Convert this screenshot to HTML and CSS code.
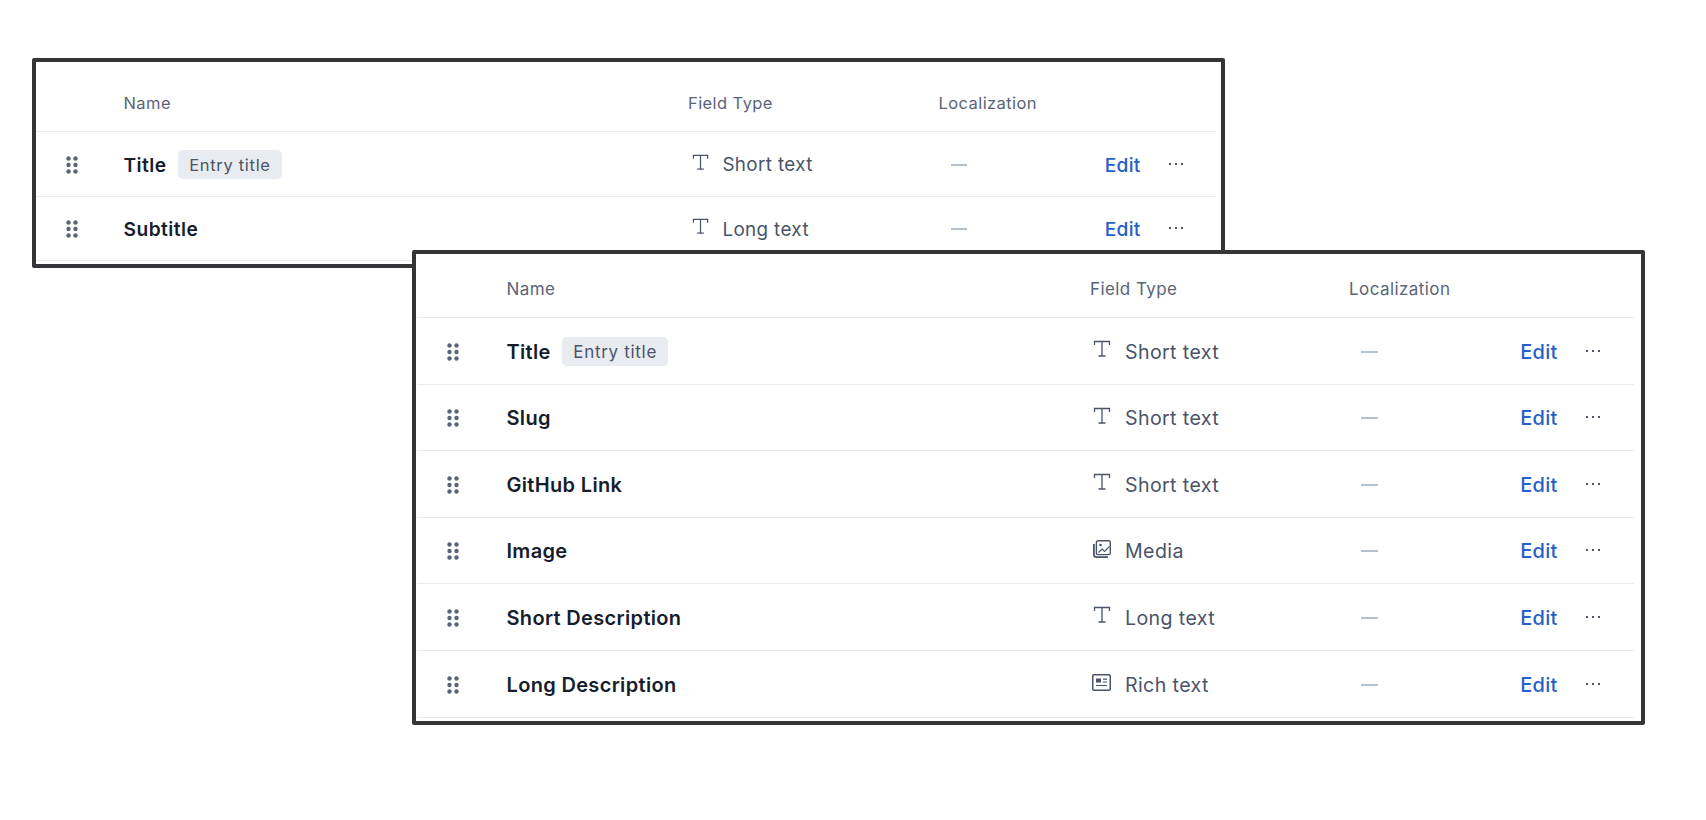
FILE: index.html
```html
<!DOCTYPE html>
<html lang="en">

<head>
    <meta charset="UTF-8">
    <meta name="viewport" content="width=device-width, initial-scale=1.0">
    <title>Content Model Fields</title>
    <link rel="stylesheet" href="styles.css">
</head>

<body>
    <svg class="sprite" width="0" height="0">
        <symbol id="icon-grip" viewBox="0 0 12 18">
            <circle cx="2.5" cy="2.5" r="2.2"/><circle cx="9.5" cy="2.5" r="2.2"/>
            <circle cx="2.5" cy="9" r="2.2"/><circle cx="9.5" cy="9" r="2.2"/>
            <circle cx="2.5" cy="15.5" r="2.2"/><circle cx="9.5" cy="15.5" r="2.2"/>
        </symbol>
        <symbol id="icon-text" viewBox="0 0 18 18">
            <path d="M1.5 5V1.5h15V5M9 1.5v14.5M5.5 16h7" fill="none" stroke="currentColor" stroke-width="1.3"/>
        </symbol>
        <symbol id="icon-media" viewBox="0 0 18 18">
            <rect x="3.4" y="0.7" width="13.9" height="13.9" rx="1.6" fill="none" stroke="currentColor" stroke-width="1.4"/>
            <path d="M0.9 4v10.6A2.5 2.5 0 0 0 3.4 17.1H15" fill="none" stroke="currentColor" stroke-width="1.8"/>
            <path d="M5.5 12.5l3.5-3.5 2.5 2.500 5-5" fill="none" stroke="currentColor" stroke-width="1.2"/>
            <circle cx="7.5" cy="5" r="1.3" fill="currentColor"/>
        </symbol>
        <symbol id="icon-rich" viewBox="0 0 19 17">
            <rect x="0.75" y="0.75" width="17.5" height="15.5" rx="1.2" fill="none" stroke="currentColor" stroke-width="1.5"/>
            <path d="M4 4.5h5v4H4z" fill="currentColor"/>
            <path d="M11 5.2h4M11 8h4M4 11.5h11" fill="none" stroke="currentColor" stroke-width="1.2"/>
        </symbol>
        <symbol id="icon-more" viewBox="0 0 16 4">
            <circle cx="2" cy="2" r="1.1"/><circle cx="8" cy="2" r="1.1"/><circle cx="14" cy="2" r="1.1"/>
        </symbol>
    </svg>

    <div class="frame frame-back">
        <div class="fields">
            <div class="head">
                <span></span><span>Name</span><span>Field Type</span><span>Localization</span><span></span>
            </div>
            <div class="row">
                <svg class="grip"><use href="#icon-grip"/></svg>
                <div class="name">Title <span class="tag">Entry title</span></div>
                <div class="type"><svg class="icon"><use href="#icon-text"/></svg>Short text</div>
                <div class="dash"></div>
                <div class="actions"><a class="edit">Edit</a><svg class="more"><use href="#icon-more"/></svg></div>
            </div>
            <div class="row">
                <svg class="grip"><use href="#icon-grip"/></svg>
                <div class="name">Subtitle</div>
                <div class="type"><svg class="icon"><use href="#icon-text"/></svg>Long text</div>
                <div class="dash"></div>
                <div class="actions"><a class="edit">Edit</a><svg class="more"><use href="#icon-more"/></svg></div>
            </div>
        </div>
    </div>

    <div class="frame frame-front">
        <div class="fields">
            <div class="head">
                <span></span><span>Name</span><span>Field Type</span><span>Localization</span><span></span>
            </div>
            <div class="row">
                <svg class="grip"><use href="#icon-grip"/></svg>
                <div class="name">Title <span class="tag">Entry title</span></div>
                <div class="type"><svg class="icon"><use href="#icon-text"/></svg>Short text</div>
                <div class="dash"></div>
                <div class="actions"><a class="edit">Edit</a><svg class="more"><use href="#icon-more"/></svg></div>
            </div>
            <div class="row">
                <svg class="grip"><use href="#icon-grip"/></svg>
                <div class="name">Slug</div>
                <div class="type"><svg class="icon"><use href="#icon-text"/></svg>Short text</div>
                <div class="dash"></div>
                <div class="actions"><a class="edit">Edit</a><svg class="more"><use href="#icon-more"/></svg></div>
            </div>
            <div class="row">
                <svg class="grip"><use href="#icon-grip"/></svg>
                <div class="name">GitHub Link</div>
                <div class="type"><svg class="icon"><use href="#icon-text"/></svg>Short text</div>
                <div class="dash"></div>
                <div class="actions"><a class="edit">Edit</a><svg class="more"><use href="#icon-more"/></svg></div>
            </div>
            <div class="row">
                <svg class="grip"><use href="#icon-grip"/></svg>
                <div class="name">Image</div>
                <div class="type"><svg class="icon"><use href="#icon-media"/></svg>Media</div>
                <div class="dash"></div>
                <div class="actions"><a class="edit">Edit</a><svg class="more"><use href="#icon-more"/></svg></div>
            </div>
            <div class="row">
                <svg class="grip"><use href="#icon-grip"/></svg>
                <div class="name">Short Description</div>
                <div class="type"><svg class="icon"><use href="#icon-text"/></svg>Long text</div>
                <div class="dash"></div>
                <div class="actions"><a class="edit">Edit</a><svg class="more"><use href="#icon-more"/></svg></div>
            </div>
            <div class="row">
                <svg class="grip"><use href="#icon-grip"/></svg>
                <div class="name">Long Description</div>
                <div class="type"><svg class="icon icon-wide"><use href="#icon-rich"/></svg>Rich text</div>
                <div class="dash"></div>
                <div class="actions"><a class="edit">Edit</a><svg class="more"><use href="#icon-more"/></svg></div>
            </div>
        </div>
    </div>
</body>
</html>
```

FILE: styles.css
```css
body {
    font-family: 'Inter', sans-serif;
    margin: 0;
    padding: 0;
    background-color: #fff;
    color: #4a5468;
}

.sprite {
    position: absolute;
}

/* the two screenshots overlap, so each frame is placed on the page */
.frame {
    position: absolute;
    box-sizing: border-box;
    background-color: #fff;
    border: 4px solid #333538;
    border-radius: 2px;
}

.frame-back {
    left: 32px;
    top: 58px;
    width: 1193px;
    height: 210px;
    padding: 0 5px 0 1px;
    font-size: 19.2px;
    --columns: 86.5px 564.5px 250.5px 1fr auto;
    --head: 70px;
    --head-shift: 13px;
    --small: 16.5px;
    --row: 64.5px;
    --name-spacing: 0.45px;
    --grip-left: 29px;
    --type-left: 4px;
    --type-gap: 13.4px;
    --action-gap: 27px;
    --action-end: 32.5px;
    --dash-offset: 12.5px;
    --dash-width: 16px;
    --icon: 17px;
}

.frame-front {
    left: 412px;
    top: 250px;
    width: 1233px;
    height: 475px;
    padding: 0 7px 0 1px;
    font-size: 20px;
    --columns: 89.5px 583.5px 259px 1fr auto;
    --head: 64px;
    --head-shift: 6px;
    --small: 17px;
    --row: 66.6px;
    --name-spacing: 0.33px;
    --grip-left: 29.5px;
    --type-left: 3px;
    --type-gap: 14px;
    --action-gap: 27px;
    --action-end: 33.5px;
    --dash-offset: 12px;
    --dash-width: 17px;
    --icon: 18px;
}

.head,
.row {
    display: grid;
    grid-template-columns: var(--columns);
    align-items: center;
    border-bottom: 1.5px solid #e8ebf0;
    box-sizing: border-box;
}

.head {
    height: var(--head);
    padding-top: var(--head-shift);
    font-size: var(--small);
    letter-spacing: 0.42px;
    color: #5a6478;
}

.row {
    height: var(--row);
    padding-top: 1.5px;
}

.grip {
    width: 12px;
    height: 18px;
    margin-left: var(--grip-left);
    fill: #5a6478;
}

.name {
    display: flex;
    align-items: center;
    gap: 11.5px;
    font-weight: 600;
    letter-spacing: var(--name-spacing);
    color: #161d2d;
}

.tag {
    padding: 4.5px 11px;
    font-size: var(--small);
    font-weight: 400;
    letter-spacing: 0.7px;
    color: #4a5468;
    background-color: #e8ebef;
    border-radius: 5px;
}

.type {
    display: flex;
    align-items: center;
    gap: var(--type-gap);
    padding-left: var(--type-left);
    font-size: 0.98em;
    letter-spacing: 0.38px;
}

.icon {
    width: var(--icon);
    height: var(--icon);
    margin-top: -5px;
    flex: none;
}

.icon-wide {
    width: 19px;
    height: 17px;
    margin-left: -1px;
}

.dash {
    width: var(--dash-width);
    height: 2px;
    margin-left: var(--dash-offset);
    background-color: #b4c2d0;
}

.actions {
    display: flex;
    align-items: center;
    gap: var(--action-gap);
    padding-right: var(--action-end);
}

.edit {
    color: #2560c9;
    font-weight: 500;
    letter-spacing: 0.25px;
}

.more {
    width: 16px;
    height: 4px;
    margin-top: -2px;
    fill: #2a3040;
}
```
